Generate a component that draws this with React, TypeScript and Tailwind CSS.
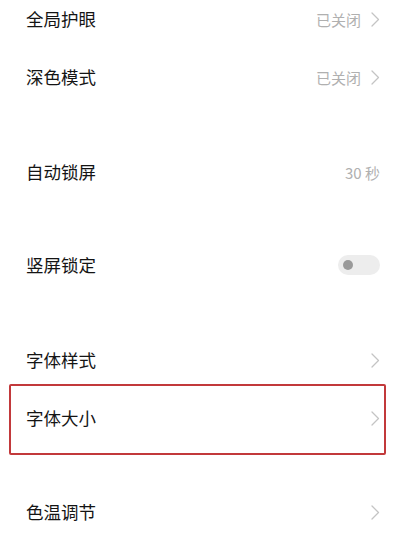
import React from "react";

const font = { fontFamily: '"Noto Sans CJK SC", "Noto Sans", sans-serif' };

function Chevron() {
  return (
    <svg width="9" height="15" viewBox="0 0 9 15" className="shrink-0">
      <polyline points="1,1 7.5,7.5 1,14" fill="none" stroke="#c4c4c4" strokeWidth="1.3" strokeLinecap="round" strokeLinejoin="round" />
    </svg>
  );
}

function Row({ label, value, chevron = true, toggle = false }: { label: string; value?: string; chevron?: boolean; toggle?: boolean }) {
  return (
    <div className="h-[58px] flex items-center justify-between pl-[26px] pr-[24px]">
      <span className="text-[17.5px] text-[#141414] leading-none">{label}</span>
      <div className="flex items-center gap-[10px]">
        {value && <span className="text-[15px] text-[#b0b0b0] leading-none">{value}</span>}
        {chevron && <Chevron />}
        {toggle && (
          <div className="w-[42px] h-[20px] rounded-full bg-[#ededed] flex items-center pl-[5px]">
            <div className="w-[10px] h-[10px] rounded-full bg-[#9a9a9a]" />
          </div>
        )}
      </div>
    </div>
  );
}

export default function App() {
  return (
    <div className="w-[404px] h-[542px] bg-white overflow-hidden" style={font}>
      <div className="mt-[-10px] flex flex-col">
        <Row label="全局护眼" value="已关闭" />
        <Row label="深色模式" value="已关闭" />
        <div className="h-[37px]" />
        <Row label="自动锁屏" value="30 秒" chevron={false} />
        <div className="h-[35px]" />
        <Row label="竖屏锁定" chevron={false} toggle />
        <div className="h-[37px]" />
        <Row label="字体样式" />
        <div className="relative">
          <Row label="字体大小" />
          <div className="absolute left-[9px] right-[18px] top-[-5px] bottom-[-8px] border-2 border-[#c2393b] rounded-[2px]" />
        </div>
        <div className="h-[36px]" />
        <Row label="色温调节" />
      </div>
    </div>
  );
}
